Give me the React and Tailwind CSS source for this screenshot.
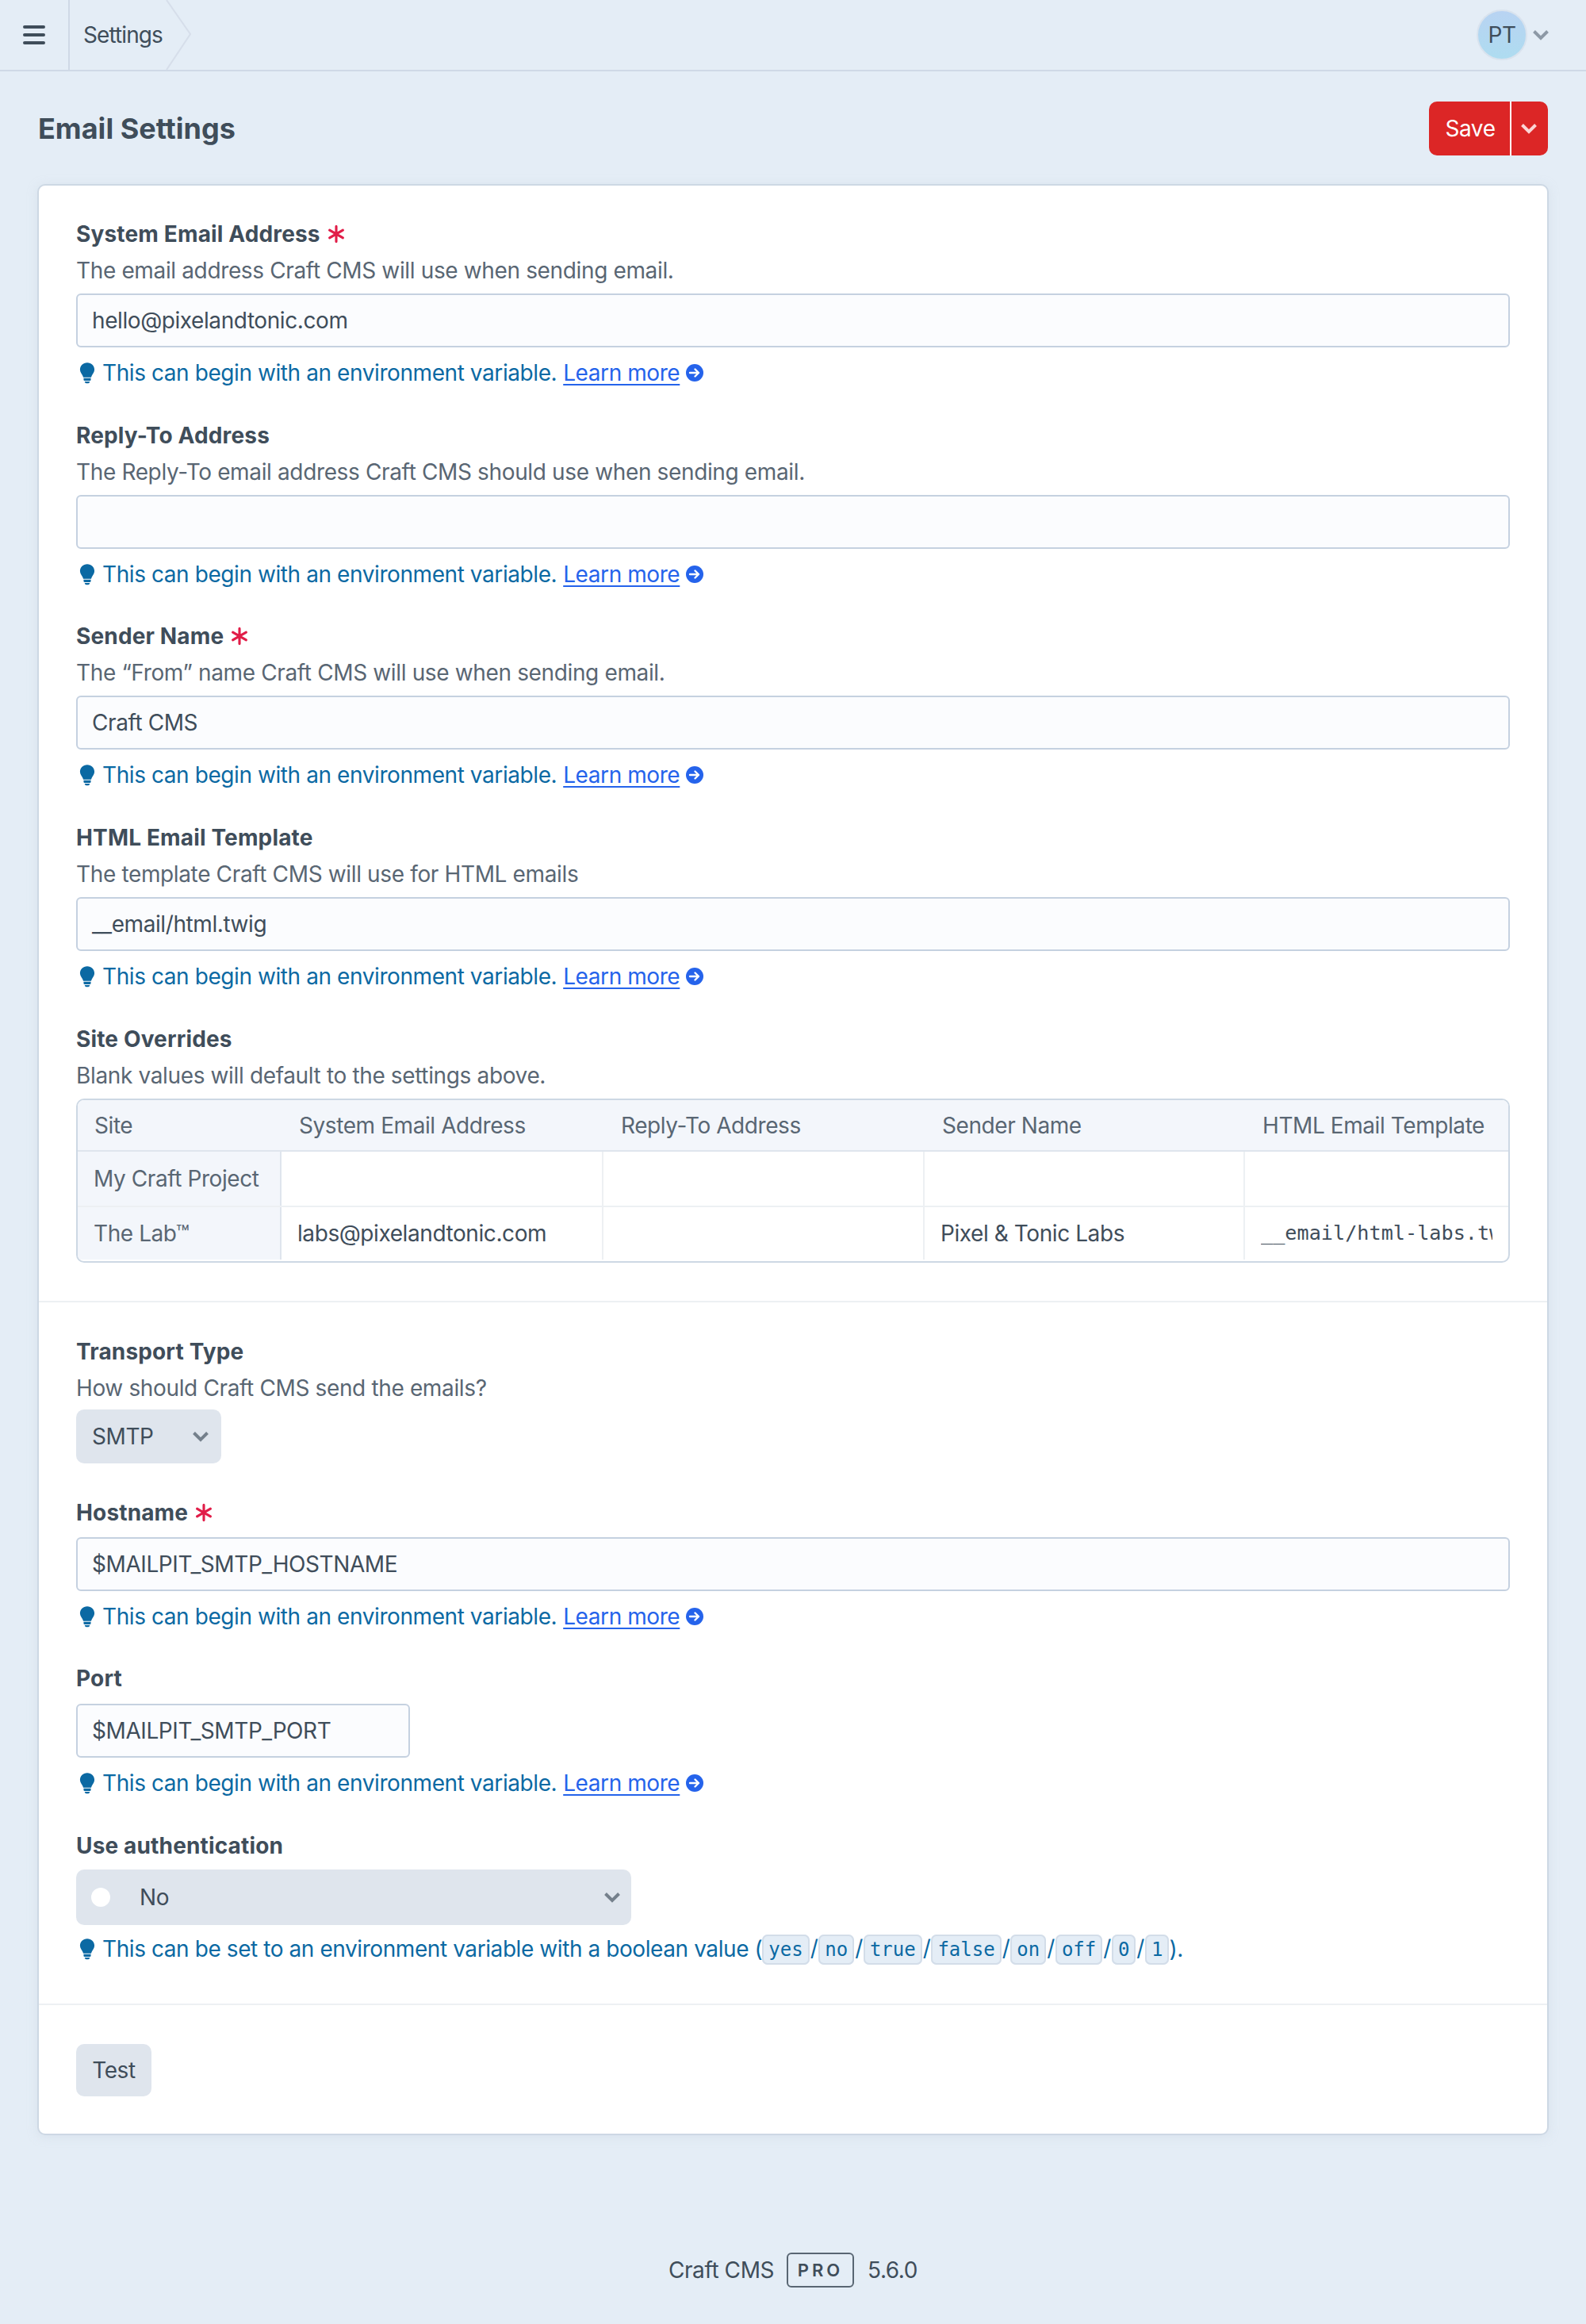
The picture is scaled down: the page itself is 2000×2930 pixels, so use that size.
const sans = "font-['Inter','Noto_Sans',sans-serif]";
const inputClass =
  "flex h-[68px] items-center rounded-[6px] border-2 border-[#c5d1e0] bg-[#fbfcfe] pl-[18px] pr-[19px] text-[#3f4d5a]";

function Chevron({ className }) {
  return (
    <svg viewBox="0 0 20 14" className={`h-[14px] w-[20px] shrink-0 ${className}`} fill="none" stroke="currentColor" strokeWidth="4">
      <path d="M1.5 2.5L10 11l8.5-8.5" />
    </svg>
  );
}

function Asterisk() {
  return (
    <svg viewBox="0 0 20 20" className="ml-[8px] inline-block h-[24px] w-[24px] text-[#e11d48]" fill="none" stroke="currentColor" strokeWidth="2.6" strokeLinecap="round">
      <path d="M10 2v16M3 6l14 8M17 6L3 14" />
    </svg>
  );
}

function Bulb() {
  return (
    <svg viewBox="0 0 22 30" className="ml-[4px] mr-[9px] h-[28px] w-[20px] shrink-0 text-[#0b69a3]" fill="currentColor">
      <path d="M11 1C5.4 1 1 5.3 1 10.6c0 3.700 2.600 6 3.700 8.400.4.9.6 1.500.8 2.200h11c.2-.7.4-1.300.8-2.200 1.100-2.400 3.700-4.700 3.700-8.400C21 5.300 16.600 1 11 1z" />
      <path d="M6 22.400h10v2.200a1.500 1.500 0 0 1-1.500 1.500h-7A1.500 1.500 0 0 1 6 24.600z" />
      <path d="M7.500 27h7a3.500 2.500 0 0 1-7 0z" />
    </svg>
  );
}

function ArrowCircle() {
  return (
    <svg viewBox="0 0 22 22" className="ml-[8px] h-[22px] w-[22px] shrink-0">
      <circle cx="11" cy="11" r="11" fill="#2563eb" />
      <path d="M5 11h11M11.500 6.500L16 11l-4.500 4.500" fill="none" stroke="#fff" strokeWidth="2.400" strokeLinecap="round" strokeLinejoin="round" />
    </svg>
  );
}

function EnvTip() {
  return (
    <div className="mt-[12px] flex h-[40px] items-center text-[#0b69a3]">
      <Bulb />
      <span>This can begin with an environment variable.</span>
      <a className="ml-[8px] text-[#2563eb] underline decoration-2 underline-offset-[4px]">Learn more</a>
      <ArrowCircle />
    </div>
  );
}

function Label({ children, required }) {
  return (
    <div className="flex h-[40px] items-center font-bold tracking-[0.15px] text-[#3f4d5a]">
      {children}
      {required ? <Asterisk /> : null}
    </div>
  );
}

function Help({ children }) {
  return <div className="mt-[6px] flex h-[40px] items-center tracking-[-0.36px] text-[#596673]">{children}</div>;
}

function TextField({ label, help, value, required }) {
  return (
    <div>
      <Label required={required}>{label}</Label>
      <Help>{help}</Help>
      <div className={`${inputClass} mt-[9px]`}>{value}</div>
      <EnvTip />
    </div>
  );
}

const columns = [
  { name: "Site", width: "w-[258px]" },
  { name: "System Email Address", width: "w-[406px]" },
  { name: "Reply-To Address", width: "w-[405px]" },
  { name: "Sender Name", width: "w-[404px]" },
  { name: "HTML Email Template", width: "flex-1" },
];

function Cell({ width, children, last }) {
  return (
    <div className={`flex h-full items-center overflow-hidden pl-[20px] pt-[1px] text-[#3f4d5a] ${width} ${last ? "" : "border-r-2 border-[#edf0f3]"}`}>
      {children}
    </div>
  );
}

function SiteTable() {
  return (
    <div className="mt-[9px] h-[207px] overflow-hidden rounded-[10px] border-2 border-[#cdd8e4]">
      <div className="flex h-[65px] items-center border-b-2 border-[#dfe5ed] bg-[#f3f6fb] pt-[1px] text-[#596673]">
        {columns.map((col) => (
          <div key={col.name} className={`whitespace-nowrap pl-[21px] ${col.width}`}>
            {col.name}
          </div>
        ))}
      </div>
      <div className="flex h-[70px] items-center border-b-2 border-[#edf0f3]">
        <div className="flex h-full w-[257px] items-center border-r-2 border-[#dfe5ed] bg-[#f3f6fb] pl-[20px] text-[#596673]">My Craft Project</div>
        <Cell width="w-[406px]" />
        <Cell width="w-[405px]" />
        <Cell width="w-[404px]" />
        <Cell width="flex-1" last />
      </div>
      <div className="flex h-[66px] items-center">
        <div className="flex h-full w-[257px] items-center border-r-2 border-[#dfe5ed] bg-[#f3f6fb] pl-[20px] pt-[1px] text-[#596673]">The Lab™</div>
        <Cell width="w-[406px]">labs@pixelandtonic.com</Cell>
        <Cell width="w-[405px]" />
        <Cell width="w-[404px]">Pixel &amp; Tonic Labs</Cell>
        <Cell width="flex-1" last>
          <span className="block w-[292px] overflow-hidden whitespace-nowrap font-['DejaVu_Sans_Mono',monospace] text-[25.2px] tracking-normal">__email/html-labs.twig</span>
        </Cell>
      </div>
    </div>
  );
}

function Code({ children }) {
  return (
    <code className="rounded-[7px] border-2 border-[#d3dde9] bg-[#e4edf6] px-[6px] py-[3px] font-['DejaVu_Sans_Mono',monospace] text-[24px] tracking-normal">
      {children}
    </code>
  );
}

export default function App() {
  const bools = ["yes", "no", "true", "false", "on", "off", "0", "1"];

  return (
    <div className={`${sans} h-[2930px] w-[2000px] bg-[#e4edf6] text-[28px] leading-[40px] tracking-[-0.42px] text-[#3f4d5a]`}>
      <header className="flex h-[90px] items-center border-b-2 border-[#cfd9e6]">
        <div className="flex h-full w-[88px] items-center justify-center border-r-2 border-[#cfd9e6]">
          <svg viewBox="0 0 28 24" className="mr-[1px] h-[24px] w-[28px]" fill="none" stroke="#3f4d5a" strokeWidth="4" strokeLinecap="round">
            <path d="M2 2h24M2 12h24M2 22h24" />
          </svg>
        </div>
        <div className="relative flex h-full items-center pl-[17px] tracking-[-0.9px]">
          Settings
          <svg viewBox="0 0 34 88" className="absolute left-[120px] top-0 h-[88px] w-[34px]" fill="none" stroke="#d6deea" strokeWidth="2">
            <path d="M2 0l30 43L2 88" />
          </svg>
        </div>
        <div className="ml-auto flex items-center pr-[47px]">
          <div className="flex h-[64px] w-[64px] items-center justify-center rounded-full border-2 border-[#d9e3ee] bg-gradient-to-t from-[#aedcf0] to-[#b8d3f2] text-[#3f4d5a]">
            PT
          </div>
          <Chevron className="ml-[7px] text-[#8d99a6]" />
        </div>
      </header>

      <div className="flex h-[142px] items-center justify-between pl-[48px] pr-[48px] pt-[2px]">
        <h1 className="text-[36px] font-bold leading-[44px] tracking-normal">Email Settings</h1>
        <div className="flex h-[68px] w-[150px] overflow-hidden rounded-[10px] bg-[#dc2626] text-white">
          <div className="flex w-[104px] items-center justify-center border-r-2 border-white pl-[2px]">Save</div>
          <div className="flex flex-1 items-center justify-center pr-[2px]">
            <Chevron className="text-[#fbd5d5]" />
          </div>
        </div>
      </div>

      <main className="mx-[47px] h-[2460px] rounded-[10px] border-2 border-[#cdd8e4] bg-white shadow-[0_2px_12px_rgba(205,216,228,0.5)]">
        <div className="flex flex-col gap-[38.7px] px-[47px] pt-[41px]">
          <TextField label="System Email Address" required help="The email address Craft CMS will use when sending email." value="hello@pixelandtonic.com" />
          <TextField label="Reply-To Address" help="The Reply-To email address Craft CMS should use when sending email." value="" />
          <TextField label="Sender Name" required help="The “From” name Craft CMS will use when sending email." value="Craft CMS" />
          <TextField label="HTML Email Template" help="The template Craft CMS will use for HTML emails" value="__email/html.twig" />
          <div>
            <Label>Site Overrides</Label>
            <Help>Blank values will default to the settings above.</Help>
            <SiteTable />
          </div>
        </div>

        <hr className="mt-[48px] border-t-2 border-[#edf0f3]" />

        <div className="flex flex-col px-[47px] pt-[42px]">
          <Label>Transport Type</Label>
          <Help>How should Craft CMS send the emails?</Help>
          <div className="mt-[7px] flex h-[68px] w-[183px] items-center justify-between rounded-[10px] bg-[#dfe5ed] pl-[20px] pr-[16px]">
            SMTP
            <Chevron className="text-[#75808c]" />
          </div>

          <div className="mt-[42px]">
            <Label required>Hostname</Label>
            <div className={`${inputClass} mt-[11px]`}>$MAILPIT_SMTP_HOSTNAME</div>
            <EnvTip />
          </div>

          <div className="mt-[38.7px]">
            <Label>Port</Label>
            <div className={`${inputClass} mt-[12px] w-[421px]`}>$MAILPIT_SMTP_PORT</div>
            <EnvTip />
          </div>

          <div className="mt-[38.7px]">
            <Label>Use authentication</Label>
            <div className="mt-[10px] flex h-[70px] w-[700px] items-center rounded-[10px] bg-[#dfe5ed] pl-[19px] pr-[14px]">
              <span className="h-[24px] w-[24px] rounded-full bg-white" />
              <span className="ml-[37px]">No</span>
              <Chevron className="ml-auto text-[#75808c]" />
            </div>
            <div className="mt-[10px] flex h-[40px] items-center whitespace-pre text-[#0b69a3]">
              <Bulb />
              <span>This can be set to an environment variable with a boolean value (</span>
              {bools.map((b, i) => (
                <span key={b}>
                  <Code>{b}</Code>
                  {i < bools.length - 1 ? <span className="mx-[1px]">/</span> : null}
                </span>
              ))}
              <span>).</span>
            </div>
          </div>
        </div>

        <hr className="mt-[49px] border-t-2 border-[#edf0f3]" />

        <div className="px-[47px] pt-[49px]">
          <button className="flex h-[66px] w-[95px] items-center justify-center rounded-[10px] bg-[#dfe5ed] text-[#3f4d5a]">Test</button>
        </div>
      </main>

      <footer className="mt-[148px] flex items-center justify-center text-[#3f4d5a]">
        <span>Craft CMS</span>
        <span className="ml-[16px] flex h-[44px] w-[85px] items-center justify-center rounded-[6px] border-2 border-[#596673] text-[22px] font-semibold tracking-[4px]">PRO</span>
        <span className="ml-[17px]">5.6.0</span>
      </footer>
    </div>
  );
}
